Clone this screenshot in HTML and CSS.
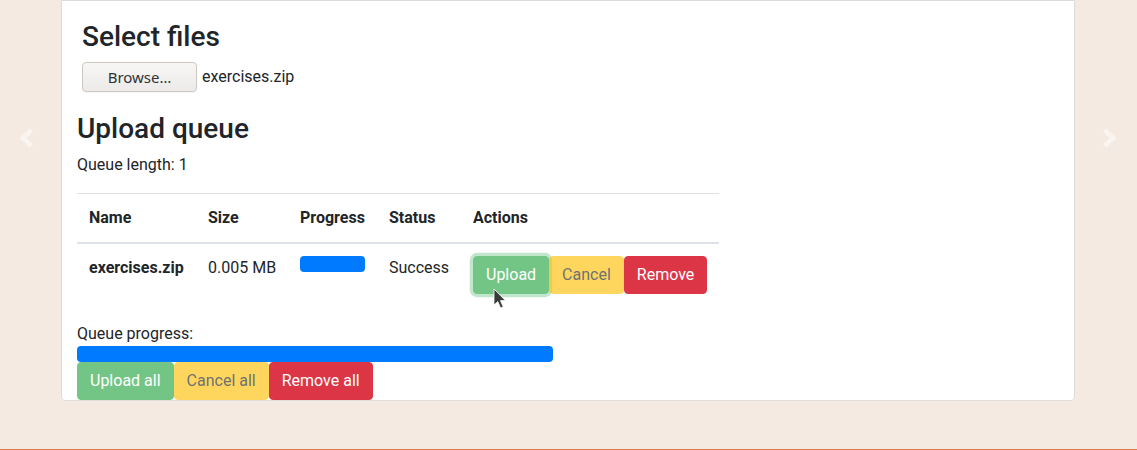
FILE: index.html
```html
<!DOCTYPE html>
<html lang="en">
<head>
<meta charset="utf-8">
<title>Upload queue</title>
<link rel="stylesheet" href="styles.css">
</head>
<body>
<div class="page">
  <a class="carousel-nav nav-prev" aria-label="Previous">
    <svg width="16" height="22" viewBox="0 0 16 22"><polyline points="12.5,3 4,11 12.5,19" fill="none" stroke="#fff" stroke-width="4.6" stroke-linejoin="miter" stroke-linecap="butt"/></svg>
  </a>
  <div class="card">
    <section class="select-section">
      <h3 class="heading">Select files</h3>
      <div class="file-row">
        <button class="browse-btn" type="button">Browse…</button>
        <span class="file-name">exercises.zip</span>
      </div>
    </section>
    <section class="queue-section">
      <h3 class="heading">Upload queue</h3>
      <p class="queue-length">Queue length: 1</p>
      <table class="queue-table">
        <thead>
          <tr>
            <th class="col-name">Name</th>
            <th class="col-size">Size</th>
            <th class="col-progress">Progress</th>
            <th class="col-status">Status</th>
            <th class="col-actions">Actions</th>
          </tr>
        </thead>
        <tbody>
          <tr>
            <td><strong>exercises.zip</strong></td>
            <td>0.005 MB</td>
            <td><div class="progress"><div class="progress-bar" style="width:100%"></div></div></td>
            <td>Success</td>
            <td>
              <div class="btn-row">
                <button class="btn btn-success is-disabled is-focused" type="button">Upload</button>
                <button class="btn btn-warning is-disabled" type="button">Cancel</button>
                <button class="btn btn-danger" type="button">Remove</button>
              </div>
            </td>
          </tr>
        </tbody>
      </table>
      <div class="queue-progress">
        <div class="queue-progress-label">Queue progress:</div>
        <div class="progress progress-wide"><div class="progress-bar" style="width:100%"></div></div>
      </div>
      <div class="btn-row">
        <button class="btn btn-success is-disabled" type="button">Upload all</button>
        <button class="btn btn-warning is-disabled" type="button">Cancel all</button>
        <button class="btn btn-danger" type="button">Remove all</button>
      </div>
    </section>
  </div>
  <a class="carousel-nav nav-next" aria-label="Next">
    <svg width="16" height="22" viewBox="0 0 16 22"><polyline points="3.5,3 12,11 3.5,19" fill="none" stroke="#fff" stroke-width="4.6" stroke-linejoin="miter" stroke-linecap="butt"/></svg>
  </a>
  <svg class="cursor" width="14" height="22" viewBox="0 0 14 22">
    <path d="M1 1 L1 17 L4.8 13.6 L7.6 20 L10.2 18.9 L7.5 12.6 L12.4 12.6 Z" fill="#3a3a3a" stroke="#ffffff" stroke-width="0.8" stroke-linejoin="round"/>
  </svg>
</div>
<div class="footer-line"></div>
</body>
</html>
```

FILE: styles.css
```css
* {
  box-sizing: border-box;
}

html, body {
  margin: 0;
  padding: 0;
}

body {
  background: #f4eae2;
  font-family: Roboto, "Liberation Sans", Arial, sans-serif;
  font-size: 16px;
  line-height: 24px;
  color: #212529;
}

.page {
  position: relative;
  height: 449px;
  overflow: hidden;
}

.footer-line {
  height: 1px;
  background: #df7a44;
}

.carousel-nav {
  position: absolute;
  top: 127px;
  width: 16px;
  height: 22px;
  opacity: 0.55;
}

.carousel-nav svg {
  display: block;
}

.nav-prev {
  left: 19px;
}

.nav-next {
  left: 1101px;
}

.cursor {
  position: absolute;
  left: 493px;
  top: 288px;
}

.card {
  width: 1014px;
  margin: 0 0 0 61px;
  background: #fff;
  border: 1px solid #dedbd8;
  border-radius: 0 0 4px 4px;
  padding: 19px 15px 0 15px;
}

.heading {
  margin: 0 0 8px 0;
  font-size: 28px;
  line-height: 33.6px;
  font-weight: 500;
  color: #212529;
}

.select-section {
  padding-left: 5px;
  margin-bottom: 20px;
}

.file-row {
  display: flex;
  align-items: center;
  height: 30px;
}

.browse-btn {
  width: 115px;
  height: 30px;
  padding: 0;
  border: 1px solid #cdc7c2;
  border-radius: 4px;
  background: linear-gradient(#f7f6f5, #edebe9);
  font-family: "Noto Sans", "DejaVu Sans", sans-serif;
  font-size: 15px;
  color: #2e3436;
  box-shadow: 0 1px 0 rgba(0, 0, 0, 0.04);
}

.file-name {
  margin-left: 5px;
}

.queue-length {
  margin: 0 0 16px 0;
}

.queue-table {
  width: 642px;
  border-collapse: collapse;
  table-layout: fixed;
  margin-bottom: 16px;
}

.queue-table th,
.queue-table td {
  padding: 12px;
  text-align: left;
  border-top: 1px solid #dee2e6;
  vertical-align: top;
  white-space: nowrap;
}

.queue-table thead th {
  font-weight: 700;
  vertical-align: bottom;
  border-bottom: 2px solid #dee2e6;
}

.col-name { width: 119px; }
.col-size { width: 92px; }
.col-progress { width: 89px; }
.col-status { width: 84px; }
.col-actions { width: 258px; }

.progress {
  height: 16px;
  background: #e9ecef;
  border-radius: 4px;
  overflow: hidden;
  display: flex;
}

.progress-bar {
  background: #007bff;
  height: 100%;
}

.progress-wide {
  width: 476px;
}

.btn-row {
  display: flex;
}

.btn {
  font-family: inherit;
  font-size: 16px;
  line-height: 24px;
  padding: 6px 12px;
  border: 1px solid transparent;
  border-radius: 4px;
  font-weight: 400;
  cursor: pointer;
}

.btn-success {
  background: #28a745;
  border-color: #28a745;
  color: #fff;
}

.btn-warning {
  background: #ffc107;
  border-color: #ffc107;
  color: #212529;
}

.btn-danger {
  background: #dc3545;
  border-color: #dc3545;
  color: #fff;
}

.is-disabled {
  opacity: 0.65;
}

.is-focused {
  box-shadow: 0 0 0 3.2px rgba(72, 180, 97, 0.5);
}
```
